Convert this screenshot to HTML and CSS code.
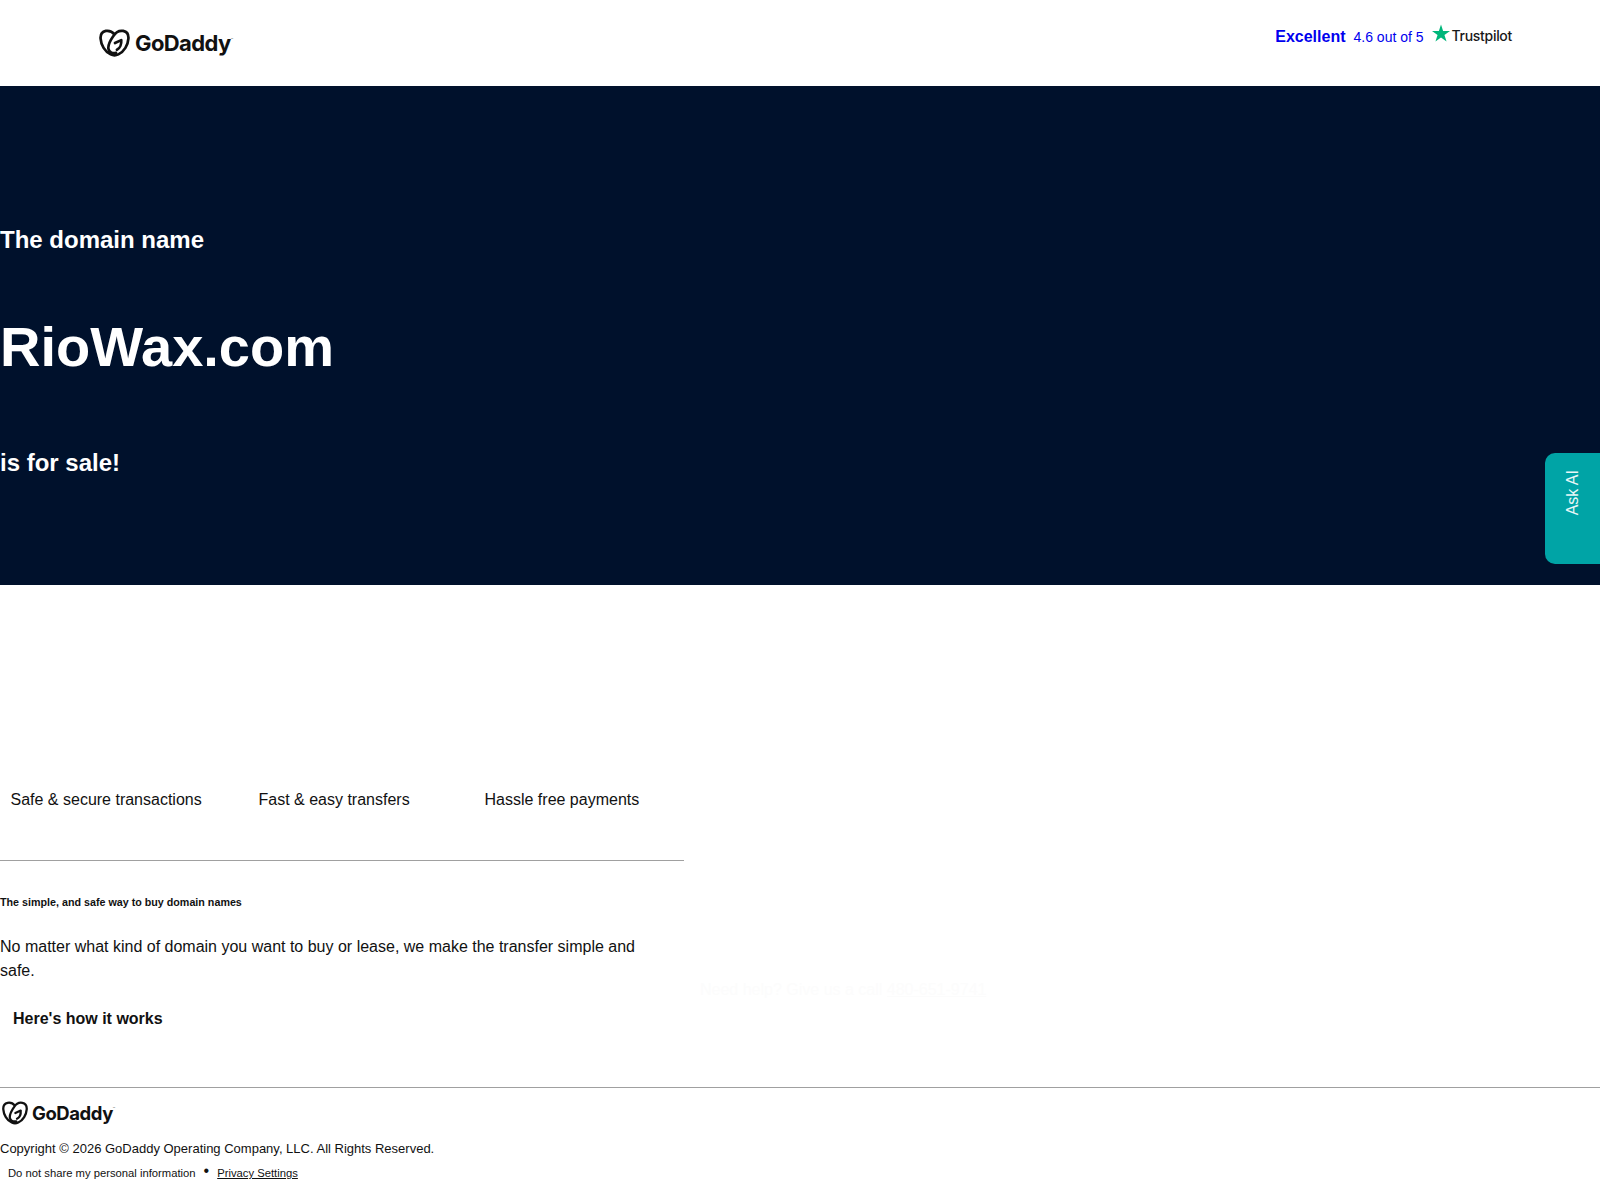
FILE: index.html
```html
<!DOCTYPE html>
<html lang="en">
<head>
<meta charset="utf-8">
<title>RioWax.com is for sale</title>
<link rel="stylesheet" href="styles.css">
</head>
<body>
<header class="topbar">
  <a class="logo logo-top" href="#">
    <svg class="heart" viewBox="0 0 32 29" aria-hidden="true"><path d="M16 5.500C13.500 2.500 10 1.500 7 2 3 2.800 1.300 6 1.600 10 2 16.500 6 23.500 12 26.300c2.500 1.200 5.500 1.200 8 0 6-2.800 10-9.800 10.400-16.300.3-4-1.400-7.200-5.400-8-3.500-.6-7.500 1-10 5-3.500 5-6 9.500-5.300 13.500.6 3.500 4 5 7.800 4.200"/><path d="M16.500 14.500L23 11.500c.3 4-1.200 8.500-4.500 10"/></svg>
    <span class="wordmark">GoDaddy<span class="tm">™</span></span>
  </a>
  <div class="rating">
    <a class="rating-link" href="#"><strong class="rating-word">Excellent</strong><span class="rating-score">4.6 out of 5</span></a>
    <svg class="tp-star" viewBox="0 0 24 23" aria-hidden="true"><path d="M12 0l2.800 8.700H24l-7.400 5.400 2.800 8.700L12 17.400l-7.400 5.400 2.800-8.700L0 8.700h9.200z"/></svg>
    <span class="tp-name">Trustpilot</span>
  </div>
</header>

<section class="hero">
  <h2 class="hero-line hero-intro">The domain name</h2>
  <h1 class="hero-domain">RioWax.com</h1>
  <h2 class="hero-line">is for sale!</h2>
  <button class="ask-ai" type="button"><span class="ask-ai-label">Ask AI</span></button>
</section>

<main class="content">
  <div class="details">
    <ul class="perks">
      <li class="perk perk-1">Safe &amp; secure transactions</li>
      <li class="perk perk-2">Fast &amp; easy transfers</li>
      <li class="perk perk-3">Hassle free payments</li>
    </ul>
    <hr class="rule">
    <h6 class="simple-title">The simple, and safe way to buy domain names</h6>
    <p class="simple-copy">No matter what kind of domain you want to buy or lease, we make the transfer simple and safe.</p>
    <a class="how-link" href="#">Here's how it works</a>
  </div>
  <p class="help">Need help? Give us a call <a class="help-phone" href="#">480-651-9741</a></p>
</main>

<footer class="footer">
  <a class="logo logo-foot" href="#">
    <svg class="heart" viewBox="0 0 32 29" aria-hidden="true"><path d="M16 5.500C13.500 2.500 10 1.500 7 2 3 2.800 1.300 6 1.600 10 2 16.500 6 23.500 12 26.300c2.500 1.200 5.500 1.200 8 0 6-2.800 10-9.800 10.400-16.300.3-4-1.400-7.200-5.400-8-3.500-.6-7.500 1-10 5-3.500 5-6 9.500-5.300 13.500.6 3.500 4 5 7.800 4.200"/><path d="M16.500 14.500L23 11.500c.3 4-1.200 8.500-4.500 10"/></svg>
    <span class="wordmark">GoDaddy<span class="tm">™</span></span>
  </a>
  <p class="copyright">Copyright © 2026 GoDaddy Operating Company, LLC. All Rights Reserved.</p>
  <div class="legal">
    <span class="legal-item">Do not share my personal information</span>
    <span class="legal-dot">•</span>
    <a class="legal-link" href="#">Privacy Settings</a>
  </div>
</footer>
</body>
</html>
```
FILE: styles.css
```css
* { box-sizing: border-box; }
html, body { margin: 0; padding: 0; }
body {
  font-family: "Liberation Sans", Arial, sans-serif;
  color: #111;
  background: #fff;
  height: 1200px;
  overflow: hidden;
}
a { color: inherit; }

.topbar {
  height: 86px;
  display: flex;
  justify-content: space-between;
  padding: 0 88px 0 99px;
}
.logo { display: flex; align-items: center; text-decoration: none; color: #111; }
.logo-top { gap: 5px; height: 86px; }
.heart { fill: none; stroke: #111; stroke-width: 2.800; stroke-linecap: round; stroke-linejoin: round; }
.logo-top .heart { width: 31px; height: 28px; }
.wordmark {
  font-family: "Inter", sans-serif;
  font-weight: 700;
  letter-spacing: -0.600px;
}
.tm { font-size: 4px; font-weight: 400; letter-spacing: 0; vertical-align: 10px; color: #666; }
.logo-top .wordmark { font-size: 22px; }

.rating { display: flex; align-items: center; height: 72px; }
.rating-link { color: #0000ee; text-decoration: none; display: flex; align-items: baseline; gap: 8px; margin-top: 2px; }
.rating-word { font-size: 16px; font-weight: 700; }
.rating-score { font-size: 14px; }
.tp-star { width: 18px; height: 18px; fill: #00b67a; margin: 0 2px 6px 8px; }
.tp-name { font-family: "Inter", sans-serif; font-size: 14px; font-weight: 500; letter-spacing: -0.3px; color: #191919; margin-top: -1px; }

.hero {
  position: relative;
  height: 499px;
  background: #00112c;
  color: #fff;
  padding-top: 140px;
}
.hero-line { margin: 0; font-size: 24px; line-height: 28px; font-weight: 700; }
.hero-domain { margin: 61px 0 70px; font-size: 56px; line-height: 64px; font-weight: 700; }
.ask-ai {
  position: absolute;
  right: 0;
  top: 367px;
  width: 55px;
  height: 111px;
  border: 0;
  padding: 0;
  background: #00a4a6;
  border-radius: 10px 0 0 10px;
  color: #e8f7f7;
  font: 16px "Liberation Sans", Arial, sans-serif;
  display: flex;
  align-items: center;
  justify-content: center;
}
.ask-ai-label { writing-mode: vertical-rl; transform: rotate(180deg); margin-bottom: 32px; }

.content { height: 502px; display: flex; align-items: flex-start; }
.details { width: 684px; padding-top: 206px; }
.perks { list-style: none; margin: 0; padding: 0; display: flex; font-size: 16px; line-height: 18px; }
.perk-1 { margin-left: 10.500px; width: 248px; }
.perk-2 { width: 226px; }
.rule { margin: 51px 0 0; border: 0; border-top: 1px solid #a0a0a0; }
.simple-title { margin: 35px 0 0; font-size: 10.720px; line-height: 12px; font-weight: 700; }
.simple-copy { margin: 27px 0 0; font-size: 16px; line-height: 24px; width: 650px; }
.how-link { display: block; margin: 24px 0 0 13px; font-size: 16px; line-height: 24px; font-weight: 700; text-decoration: none; }
.help { margin: 396px 0 0 16px; font-size: 16px; color: #fcfcfc; }

.footer { border-top: 1px solid #a0a0a0; height: 113px; }
.logo-foot { gap: 4px; margin-top: 12px; padding-left: 2px; height: 26px; }
.logo-foot .heart { width: 26px; height: 24px; }
.logo-foot .wordmark { font-size: 18.500px; letter-spacing: -0.450px; }
.copyright { margin: 15px 0 0; font-size: 13px; line-height: 16px; }
.legal { display: flex; align-items: center; margin: 9px 0 0 8px; font-size: 11.250px; line-height: 14px; }
.legal-dot { margin: -4px 8px 0 8px; font-size: 16px; line-height: 14px; }
```
